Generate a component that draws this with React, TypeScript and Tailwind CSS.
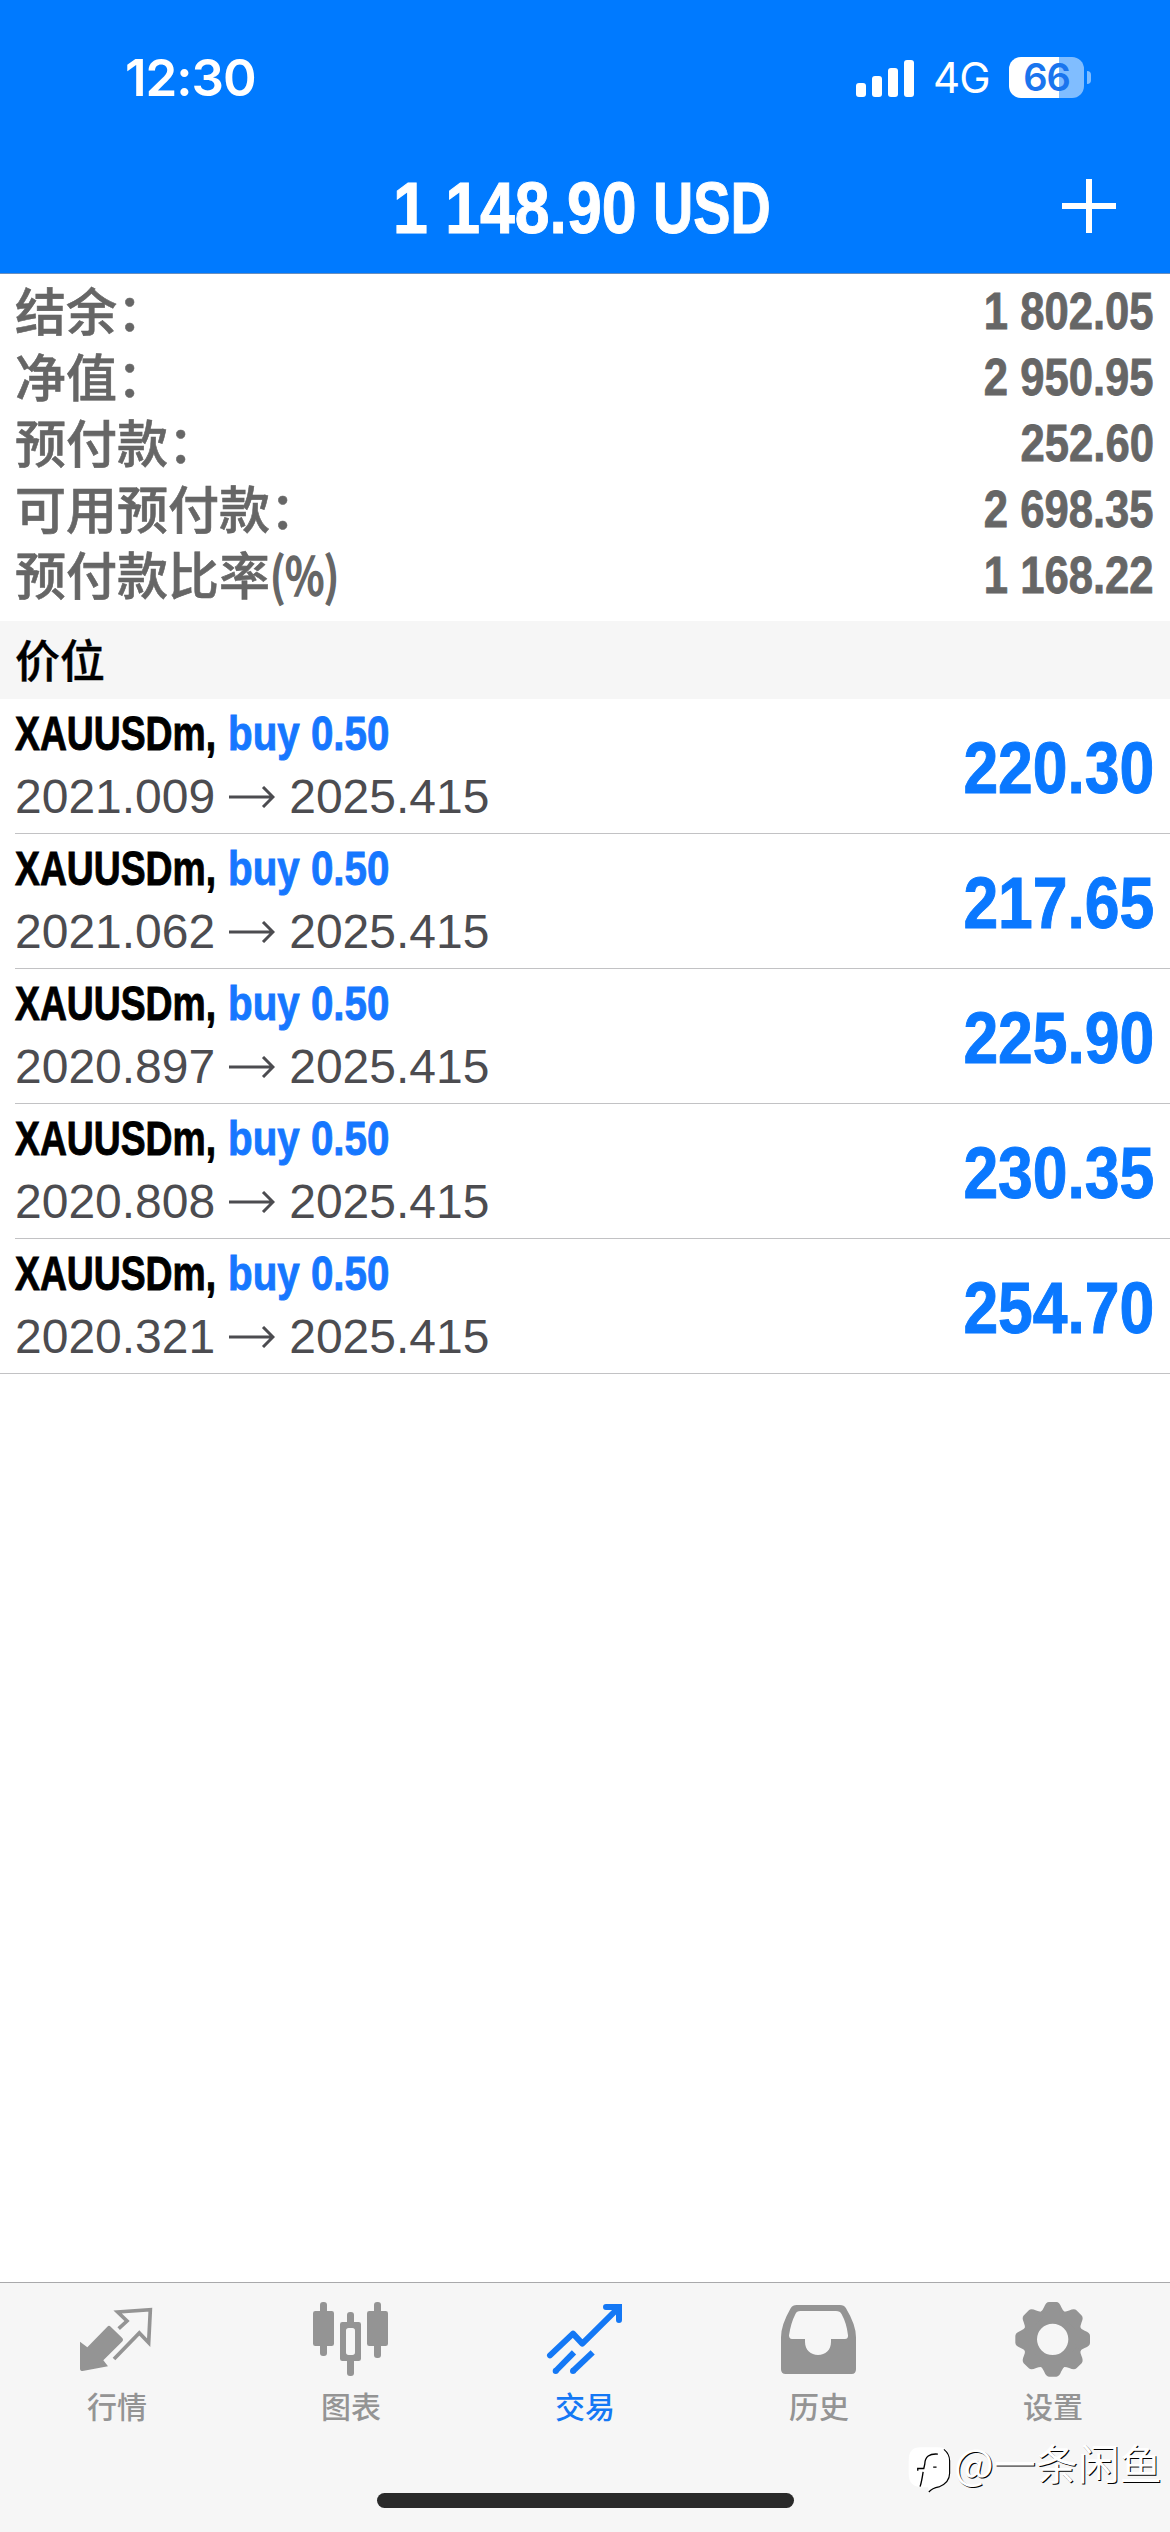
import React from 'react';

interface Position {
    id: number;
    open: string;
    current: string;
    profit: string;
}

const summary = [
    { label: '结余：', value: '1 802.05' },
    { label: '净值：', value: '2 950.95' },
    { label: '预付款：', value: '252.60' },
    { label: '可用预付款：', value: '2 698.35' },
    { label: '预付款比率', unit: '(%)', value: '1 168.22' },
];

const positions: Position[] = [
    { id: 1, open: '2021.009', current: '2025.415', profit: '220.30' },
    { id: 2, open: '2021.062', current: '2025.415', profit: '217.65' },
    { id: 3, open: '2020.897', current: '2025.415', profit: '225.90' },
    { id: 4, open: '2020.808', current: '2025.415', profit: '230.35' },
    { id: 5, open: '2020.321', current: '2025.415', profit: '254.70' },
];

const QuotesIcon = () => (
    <svg viewBox="234 120 234 234" className="w-[78px] h-[78px]" fill="currentColor">
        <path d="M240 245 L262 262 L322 200 Q327 195 332 200 L366 233 Q372 239 366 245 L310 301 L324 319 L248 333 Q240 333 240 326Z" />
        <path
            d="M356 206 L381 183 L353 156 L451 149 L446 248 L418 219 L342 297"
            fill="none"
            stroke="currentColor"
            strokeWidth="11"
        />
    </svg>
);

const ChartsIcon = () => (
    <svg viewBox="936 120 234 234" className="w-[78px] h-[78px]" fill="currentColor">
        <rect x="960" y="126" width="21" height="162" rx="9" />
        <rect x="939" y="153" width="63" height="105" rx="7" />
        <rect x="1122" y="126" width="21" height="168" rx="9" />
        <rect x="1101" y="153" width="63" height="105" rx="7" />
        <rect x="1041" y="156" width="21" height="40" rx="9" />
        <rect x="1041" y="290" width="21" height="58" rx="9" />
        <path
            fillRule="evenodd"
            d="M1027 186 H1076 Q1083 186 1083 193 V296 Q1083 303 1076 303 H1027 Q1020 303 1020 296 V193 Q1020 186 1027 186Z M1046 204 Q1038 204 1038 212 V277 Q1038 285 1046 285 H1057 Q1065 285 1065 277 V212 Q1065 204 1057 204Z"
        />
    </svg>
);

const TradeIcon = () => (
    <svg viewBox="228 120 234 234" className="w-[78px] h-[78px]" fill="none" stroke="currentColor" strokeWidth="18">
        <path d="M240 286 L309 221 L337 251 L446 143" strokeLinecap="round" strokeLinejoin="round" />
        <path d="M408 141 H447 V180" strokeLinecap="round" />
        <path d="M436 132 H450 Q456 132 456 138 V155Z" fill="currentColor" stroke="none" />
        <path d="M312 277 L257 333" />
        <path d="M368 277 L309 333" />
        <circle cx="257" cy="333" r="9" fill="currentColor" stroke="none" />
        <circle cx="309" cy="333" r="9" fill="currentColor" stroke="none" />
    </svg>
);

const HistoryIcon = () => (
    <svg viewBox="930 120 234 234" className="w-[78px] h-[78px]" fill="currentColor">
        <path
            fillRule="evenodd"
            d="M980 135 H1110 Q1122 135 1128 145 Q1158 195 1158 232 V328 Q1158 342 1145 342 H947 Q933 342 933 328 V232 Q933 195 962 145 Q968 135 980 135Z M991 153 Q980 153 976 163 Q963 188 957 226 Q957 237 966 237 H1005 V246 C1005 270 1023 285 1044 285 C1066 285 1083 270 1083 246 V237 H1125 Q1135 237 1134 226 Q1130 190 1115 163 Q1110 153 1098 153Z"
        />
    </svg>
);

const teeth = [0, 45, 90, 135, 180, 225, 270, 315];

const SettingsIcon = () => (
    <svg viewBox="492 120 234 234" className="w-[78px] h-[78px]" fill="currentColor">
        <circle cx="608" cy="238" r="68" fill="none" stroke="currentColor" strokeWidth="42" />
        {teeth.map((angle) => (
            <path
                key={angle}
                transform={`rotate(${angle} 608 238)`}
                d="M571 157 Q578 152 582 142 Q588 126 597 126 H619 Q628 126 634 142 Q638 152 645 157 L640 170 H576Z"
            />
        ))}
    </svg>
);

const tabs = [
    { name: '行情', icon: QuotesIcon },
    { name: '图表', icon: ChartsIcon },
    { name: '交易', icon: TradeIcon, active: true },
    { name: '历史', icon: HistoryIcon },
    { name: '设置', icon: SettingsIcon },
];

const StatusBar = () => (
    <div className="flex h-[140px] items-start justify-between pl-[125px] pr-[79px] pt-[50px] text-white">
        <span className="font-['Inter',sans-serif] text-[51px] leading-[56px] font-semibold tracking-[-1px]">12:30</span>
        <div className="flex items-center pt-[7px]">
            <div className="flex h-[38px] items-end gap-[6px]">
                <div className="h-[14px] w-[10px] rounded-[3px] bg-white" />
                <div className="h-[21px] w-[10px] rounded-[3px] bg-white" />
                <div className="h-[29px] w-[10px] rounded-[3px] bg-white" />
                <div className="h-[37px] w-[10px] rounded-[3px] bg-white" />
            </div>
            <span className="ml-[19px] w-[56px] font-['Inter',sans-serif] text-[42px] leading-[41px] tracking-[-1px]">4G</span>
            <div className="ml-[20px] flex h-[41px] w-[75px] items-center justify-center rounded-[12px] bg-linear-to-r from-white from-[67%] to-[#80bdff] to-[67%]">
                <span className="font-['Inter',sans-serif] text-[38px] leading-[41px] font-semibold tracking-[-1px] text-[#1a75ee]">66</span>
            </div>
            <div className="ml-[3px] h-[13px] w-[4px] rounded-r-full bg-[#80bdff]" />
        </div>
    </div>
);

export default function App() {
    return (
        <div className="relative flex h-[2532px] w-[1170px] flex-col overflow-hidden bg-white font-['Liberation_Sans','Noto_Sans_CJK_SC',sans-serif]">
            <header className="h-[274px] shrink-0 border-b border-[#6b8fbd] bg-[#007aff]">
                <StatusBar />
                <div className="flex h-[133px] items-center pr-[54px] pl-[393px] text-white">
                    <h1 className="flex flex-1 pt-[2px] text-[73px] leading-[131px] font-bold whitespace-nowrap [-webkit-text-stroke:1px_currentColor]">
                        <span className="w-[260px] origin-left scale-x-[0.857]">1 148.90</span>
                        <span className="origin-left scale-x-[0.765]">USD</span>
                    </h1>
                    <svg viewBox="0 0 54 54" className="-mt-[1px] h-[54px] w-[54px]" fill="currentColor">
                        <rect x="0" y="24" width="54" height="6" />
                        <rect x="24" y="0" width="6" height="54" />
                    </svg>
                </div>
            </header>

            <section className="h-[347px] shrink-0 pt-[4px]">
                {summary.map((item) => (
                    <div key={item.label} className="flex h-[66px] justify-between pl-[15px] pr-[16px] text-[#666666]">
                        <div className="flex font-['Noto_Sans_CJK_SC',sans-serif] text-[51px] leading-[62px] font-medium [-webkit-text-stroke:0.6px_currentColor]">
                            <span>{item.label}</span>
                            {item.unit && <span className="origin-left scale-x-[0.82] [-webkit-text-stroke:1.6px_currentColor]">{item.unit}</span>}
                        </div>
                        <span className="origin-right scale-x-[0.855] pt-[3px] text-[51px] leading-[62px] font-bold [-webkit-text-stroke:0.8px_currentColor]">
                            {item.value}
                        </span>
                    </div>
                ))}
            </section>

            <div className="h-[78px] shrink-0 bg-[#f6f6f6] pl-[15px]">
                <span className="block font-['Noto_Sans_CJK_SC',sans-serif] text-[45px] leading-[75px] font-medium text-black [-webkit-text-stroke:0.4px_currentColor]">
                    价位
                </span>
            </div>

            <main className="flex-1">
                {positions.map((p, index) => (
                    <div key={p.id} className={index === positions.length - 1 ? '' : 'pl-[15px]'}>
                        <div
                            className={`flex h-[135px] items-center justify-between border-b border-[#c2c2c4] pr-[16px] ${index === positions.length - 1 ? 'pl-[15px]' : ''}`}
                        >
                            <div>
                                <div className="flex pb-[2px] text-[48px] leading-[60px] font-bold [-webkit-text-stroke:0.9px_currentColor]">
                                    <span className="w-[213px] origin-left scale-x-[0.777] whitespace-nowrap text-black">XAUUSDm,</span>
                                    <span className="origin-left scale-x-[0.84] whitespace-nowrap text-[#1677ff]">buy 0.50</span>
                                </div>
                                <div className="flex items-center text-[48px] leading-[62px] text-[#4c4c50]">
                                    <span>{p.open}</span>
                                    <svg viewBox="0 0 46 22" className="mx-[14px] h-[22px] w-[46px]" fill="none" stroke="currentColor" strokeWidth="3">
                                        <path d="M0 11 H44 M34 1 L44 11 L34 21" />
                                    </svg>
                                    <span>{p.current}</span>
                                </div>
                            </div>
                            <span className="origin-right scale-x-[0.855] pt-[4px] text-[73px] leading-[130px] font-bold text-[#0a78ff] [-webkit-text-stroke:1px_currentColor]">
                                {p.profit}
                            </span>
                        </div>
                    </div>
                ))}
            </main>

            <nav className="h-[250px] shrink-0 border-t border-[#a9a9ab] bg-[#f6f6f6]">
                <div className="grid h-[210px] grid-cols-5">
                    {tabs.map(({ name, icon: Icon, active }) => (
                        <div key={name} className={`flex flex-col items-center pt-[17px] ${active ? 'text-[#1478f5]' : 'text-[#949494]'}`}>
                            <Icon />
                            <span className="mt-[5px] font-['Noto_Sans_CJK_SC',sans-serif] text-[30px] leading-[44px] font-medium">{name}</span>
                        </div>
                    ))}
                </div>
                <div className="mx-auto h-[15px] w-[417px] rounded-full bg-[#2a2a2a]" />
            </nav>

            {/* author tag over the tab bar */}
            <div className="absolute top-[2443px] left-[907px] flex text-white">
                <svg viewBox="170 550 140 155" className="h-[52px] w-[47px]">
                    <path d="M210 563 H262 Q299 563 299 603 V640 Q299 670 265 682 Q247 686 236 698 L233 682 H214 Q175 682 175 642 V602 Q175 563 210 563Z" fill="#fff" />
                    <path d="M280 569 Q297 583 297 603 V640 Q297 668 265 681 Q245 685 235 696" fill="none" stroke="#000" strokeWidth="3.5" />
                    <path d="M262 583 Q224 580 223 612 L220 626 H202 V633 M218 636 Q214 664 209 680 M248 622 H258" fill="none" stroke="#000" strokeWidth="4" />
                </svg>
                <span className="-mt-[5px] font-['Noto_Sans_CJK_SC',sans-serif] text-[42px] leading-[48px] whitespace-nowrap [text-shadow:1px_1px_0_#000]">
                    @一条闲鱼
                </span>
            </div>
        </div>
    );
}
